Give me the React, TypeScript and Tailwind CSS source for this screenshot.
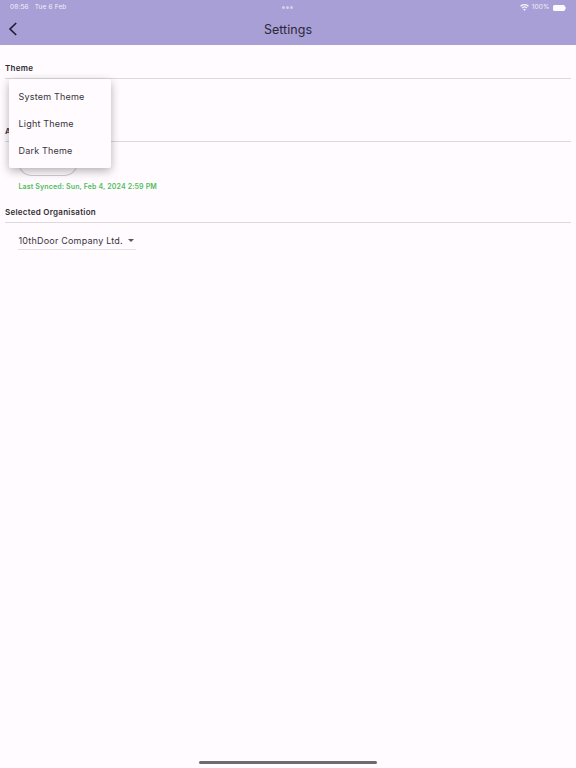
import React from 'react';

const WifiIcon = () => (
  <svg width="9" height="7" viewBox="0 0 18 14" fill="#f3f0fb">
    <path d="M9 14l-2.8-3.4a4.4 4.4 0 0 1 5.6 0L9 14z" />
    <path d="M4.9 9L3.2 7a8.8 8.8 0 0 1 11.6 0l-1.7 2a6.2 6.2 0 0 0-8.2 0z" />
    <path d="M1.9 5.5L0 3.4a13.4 13.4 0 0 1 18 0l-1.9 2.1a10.6 10.6 0 0 0-14.2 0z" />
  </svg>
);

const StatusBar = () => (
  <div className="relative flex h-[14px] items-center justify-between px-[10px] pt-[1px] text-[6.5px] tracking-[0.15px] text-[#f3f0fb]">
    <div className="flex gap-[6px]">
      <span>08:56</span>
      <span>Tue 6 Feb</span>
    </div>
    <div className="absolute left-[282px] top-[6px] flex gap-[1.5px]">
      <div className="h-[2.5px] w-[2.5px] rounded-full bg-[#d5cff0]" />
      <div className="h-[2.5px] w-[2.5px] rounded-full bg-[#d5cff0]" />
      <div className="h-[2.5px] w-[2.5px] rounded-full bg-[#d5cff0]" />
    </div>
    <div className="flex items-center gap-[3px]">
      <WifiIcon />
      <span>100%</span>
      <div className="flex items-center">
        <div className="h-[6px] w-[12px] rounded-[1.5px] bg-[#fbfaff]" />
        <div className="ml-[0.5px] h-[2px] w-[1px] bg-[#e3dff5]" />
      </div>
    </div>
  </div>
);

const Header = () => (
  <div className="h-[45px] bg-[#a79fd6]">
    <StatusBar />
    <div className="relative flex h-[31px] items-center justify-center pt-[2px]">
      <svg className="absolute left-[8px] top-[7px]" width="10" height="16" viewBox="0 0 10 16" fill="none" stroke="#1f1b2e" strokeWidth="1.6">
        <path d="M8.2 2L2 8l6.2 6" />
      </svg>
      <span className="text-[12.5px] tracking-[0.03px] text-[#2c2838]">Settings</span>
    </div>
  </div>
);

const SectionTitle = ({ children, className }: { children: React.ReactNode; className: string }) => (
  <div className={`mx-[5px] border-b border-[#dcd9dd] text-[8px] font-semibold leading-[14px] tracking-[0.27px] text-[#302d33] ${className}`}>
    {children}
  </div>
);

const ThemeMenu = () => (
  <div className="absolute left-[9px] top-[79px] flex w-[102px] flex-col rounded-[2px] bg-[#fffbff] py-[4px] shadow-[0_3px_10px_rgba(0,0,0,0.3)]">
    {['System Theme', 'Light Theme', 'Dark Theme'].map((label) => (
      <div key={label} className="flex h-[27px] items-center whitespace-nowrap pl-[9.5px] text-[9px] tracking-[0.2px] text-[#37343b]">
        {label}
      </div>
    ))}
  </div>
);

export default function App() {
  return (
    <div className="relative h-[768px] w-[576px] overflow-hidden bg-[#fffbff] font-['Inter',sans-serif]">
      <Header />

      <div className="pt-[16px]">
        <SectionTitle className="pb-[3px]">Theme</SectionTitle>
      </div>

      <div className="pt-[45px]">
        <SectionTitle className="pb-[3px]">A</SectionTitle>
      </div>

      <div className="ml-[18px] h-[35px]">
        <div className="h-[34px] w-[60px] rounded-b-[14px] border border-t-0 border-[#cfcbd2]" />
      </div>

      <div className="ml-[18.5px] mt-[5px] whitespace-nowrap text-[7px] font-semibold leading-[10px] tracking-[0.15px] text-[#4fbe5e]">
        Last Synced: Sun, Feb 4, 2024 2:59 PM
      </div>

      <div className="pt-[13px]">
        <SectionTitle className="pb-[3px]">Selected Organisation</SectionTitle>
      </div>

      <div className="ml-[18px] mt-[9px] flex h-[18px] w-[118px] items-center border-b border-[#e4e1e6] pl-[0.5px]">
        <span className="whitespace-nowrap text-[9px] tracking-[0.2px] text-[#37343b]">10thDoor Company Ltd.</span>
        <svg className="ml-[5px] shrink-0" width="6" height="3" viewBox="0 0 6 3" fill="#5a575e">
          <path d="M0 0h6L3 3z" />
        </svg>
      </div>

      <ThemeMenu />

      <div className="absolute bottom-[4px] left-[199px] h-[3px] w-[178px] rounded-full bg-[#6d6a70]" />
    </div>
  );
}
